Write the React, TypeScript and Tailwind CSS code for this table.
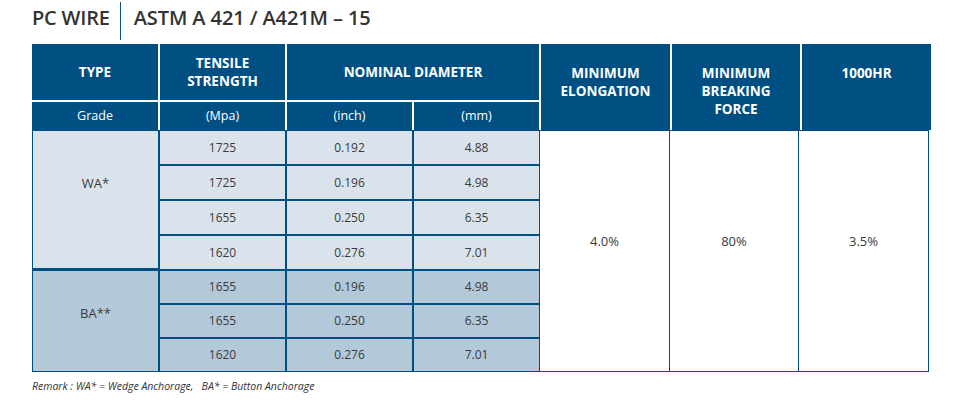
const wa = [
  ["1725", "0.192", "4.88"],
  ["1725", "0.196", "4.98"],
  ["1655", "0.250", "6.35"],
  ["1620", "0.276", "7.01"],
];

const ba = [
  ["1655", "0.196", "4.98"],
  ["1655", "0.250", "6.35"],
  ["1620", "0.276", "7.01"],
];

const font = "font-['Open_Sans',sans-serif]";

export default function App() {
  return (
    <div className={`h-[408px] w-[964px] bg-white ${font} text-[#3a3a3a]`}>
      {/* title */}
      <div className="flex h-[44px] items-start pl-[32px] pt-[2px]">
        <div className="flex h-[38px] items-start">
          <span className="pt-[1px] text-[20px] font-semibold leading-[30px] tracking-[-0.2px] text-[#333]">
            PC WIRE
          </span>
          <div className="ml-[10px] h-[38px] w-px bg-[#0b4f82]" />
          <span className="ml-[13px] pt-[1px] text-[20px] font-semibold leading-[30px] tracking-[-0.1px] text-[#333]">
            ASTM A 421 / A421M – 15
          </span>
        </div>
      </div>

      <div className="pl-[32px]">
        {/* header */}
        <div className="grid grid-cols-[126px_125px_125px_125px_129px_128px_129px] grid-rows-[56px_28px] gap-[2px] text-white">
          <div className="flex items-center justify-center bg-[#004f82] text-[13.5px] font-bold">TYPE</div>
          <div className="flex items-center justify-center bg-[#004f82] text-center text-[13.5px] font-bold leading-[18px]">
            TENSILE
            <br />
            STRENGTH
          </div>
          <div className="col-span-2 flex items-center justify-center bg-[#004f82] text-[13.5px] font-bold">
            NOMINAL DIAMETER
          </div>
          <div className="row-span-2 bg-[#004f82] pt-[20px] text-center text-[13.5px] font-bold leading-[18px]">
            MINIMUM
            <br />
            ELONGATION
          </div>
          <div className="row-span-2 bg-[#004f82] pt-[20px] text-center text-[13.5px] font-bold leading-[18px]">
            MINIMUM
            <br />
            BREAKING
            <br />
            FORCE
          </div>
          <div className="row-span-2 bg-[#004f82] pt-[20px] text-center text-[13.5px] font-bold leading-[18px]">
            1000HR
          </div>
          <div className="flex items-center justify-center bg-[#004f82] text-[12.5px]">Grade</div>
          <div className="flex items-center justify-center bg-[#004f82] text-[12.5px]">(Mpa)</div>
          <div className="flex items-center justify-center bg-[#004f82] text-[12.5px]">(inch)</div>
          <div className="flex items-center justify-center bg-[#004f82] text-[12.5px]">(mm)</div>
        </div>

        {/* body */}
        <div className="flex text-[12px]">
          <div className="w-[508px] bg-[#004f82] p-px">
            <div className="grid grid-cols-[125px_125px_125px_125px] gap-[2px]">
              <div className="row-span-4 flex h-[137px] justify-center bg-[#dae3ec] pt-[43px] text-[13px]">WA*</div>
              {wa.map((r, i) =>
                r.map((v, j) => (
                  <div key={`wa-${i}-${j}`} className="flex h-[33px] items-center justify-center bg-[#dae3ec]">
                    {v}
                  </div>
                )),
              )}
              <div className="row-span-3 flex justify-center bg-[#b3c9d9] pt-[33px] text-[13px]">BA**</div>
              {ba.map((r, i) =>
                r.map((v, j) => (
                  <div key={`ba-${i}-${j}`} className="flex h-[32px] items-center justify-center bg-[#b3c9d9]">
                    {v}
                  </div>
                )),
              )}
            </div>
          </div>
          <div className="flex h-[242px] border-y border-r border-[#004f82] text-[13px]">
            <div className="flex w-[130px] items-center justify-center border-r border-[#004f82] pb-[18px]">4.0%</div>
            <div className="flex w-[129px] items-center justify-center border-r border-[#004f82] pb-[18px]">80%</div>
            <div className="flex w-[129px] items-center justify-center pb-[18px]">3.5%</div>
          </div>
        </div>

        <p className="mt-[7px] text-[10.5px] italic text-[#333]">
          Remark : WA* = Wedge Anchorage,&nbsp;&nbsp; BA* = Button Anchorage
        </p>
      </div>
    </div>
  );
}
